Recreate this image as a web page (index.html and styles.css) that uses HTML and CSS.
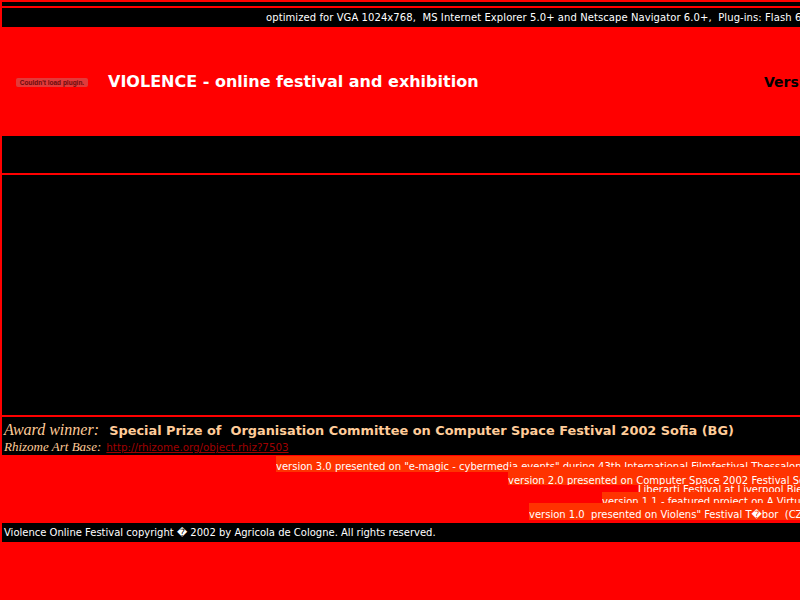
FILE: index.html
```html
<!DOCTYPE html>
<html>
<head>
<meta charset="utf-8">
<title>VIOLENCE - online festival and exhibition</title>
<link rel="stylesheet" href="styles.css">
</head>
<body>
<div class="page">
  <div class="thin"></div>
  <div class="topbar">optimized for VGA 1024x768,&nbsp; MS Internet Explorer 5.0+ and Netscape Navigator 6.0+,&nbsp; Plug-ins: Flash 6</div>
  <div class="header">
    <div class="plugin">Couldn't load plugin.</div>
    <div class="title">VIOLENCE - online festival and exhibition</div>
    <div class="versi">Version 3.0</div>
  </div>
  <div class="navbar"></div>
  <div class="flash"></div>
  <div class="award">
    <div class="line1"><span class="label">Award winner:</span>&nbsp; <b class="prize">Special Prize of&nbsp; Organisation Committee on Computer Space Festival 2002 Sofia (BG)</b></div>
    <div class="line2"><span class="label small">Rhizome Art Base:</span> <a href="#" class="link">http://rhizome.org/object.rhiz?7503</a></div>
  </div>
  <div class="marquees">
    <div class="mq r1"><span>version 3.0 presented on "e-magic - cybermedia events" during 43th International Filmfestival Thessaloniki (GR)</span></div>
    <div class="mq r2"><span>version 2.0 presented on Computer Space 2002 Festival Sofia (BG)</span></div>
    <div class="mq r3"><span>Liberarti Festival at Liverpool Biennial (UK)</span></div>
    <div class="mq r4"><span>version 1.1 - featured project on A Virtual Festival</span></div>
    <div class="mq r5"><span>version 1.0&nbsp; presented on Violens" Festival T�bor&nbsp; (CZ)</span></div>
  </div>
  <div class="footer">Violence Online Festival copyright � 2002 by Agricola de Cologne. All rights reserved.</div>
</div>
</body>
</html>
```
FILE: styles.css
```css
html, body {
  margin: 0;
  padding: 0;
  background: #ff0000;
  overflow: hidden;
}
.page {
  width: 800px;
  height: 600px;
  overflow: hidden;
  box-sizing: border-box;
  padding: 2px 0 0 2px;
  display: flex;
  flex-direction: column;
  font-family: "DejaVu Sans", Verdana, sans-serif;
}
.thin {
  height: 4px;
  background: #000;
  margin-bottom: 2px;
  flex: none;
}
.topbar {
  flex: none;
  height: 19px;
  line-height: 19px;
  background: #000;
  color: #fff;
  font-size: 10px;
  letter-spacing: 0.08px;
  white-space: nowrap;
  padding-left: 264px;
}
.header {
  flex: none;
  height: 109px;
  margin-left: -2px;
  display: flex;
  align-items: center;
  white-space: nowrap;
}
.plugin {
  margin-left: 16px;
  width: 72px;
  height: 9px;
  background: #e23a3a;
  border-radius: 2px;
  color: #6a0c0c;
  font-family: "Liberation Sans", Arial, sans-serif;
  font-size: 6.5px;
  font-weight: bold;
  line-height: 9px;
  text-align: center;
  overflow: hidden;
  margin-top: 1px;
}
.title {
  margin-left: 20px;
  color: #fff;
  font-weight: bold;
  font-size: 16px;
}
.versi {
  margin-left: auto;
  width: 36px;
  color: #000;
  font-weight: bold;
  font-size: 14px;
  flex: none;
}
.navbar {
  flex: none;
  height: 37px;
  background: #000;
  margin-bottom: 2px;
}
.flash {
  flex: none;
  height: 240px;
  background: #000;
  margin-bottom: 2px;
}
.award {
  flex: none;
  height: 38px;
  background: #000;
  box-sizing: border-box;
  padding: 4px 0 0 2px;
  white-space: nowrap;
  color: #ffcc99;
}
.line1 {
  height: 17px;
  line-height: 18px;
}
.line2 {
  height: 15px;
  line-height: 15px;
}
.label {
  font-family: "Liberation Serif", "Times New Roman", serif;
  font-style: italic;
  font-size: 16px;
}
.label.small {
  font-size: 13px;
}
.prize {
  font-size: 12.9px;
  font-weight: bold;
}
.link {
  color: #a00000;
  font-size: 10.3px;
  text-decoration: underline;
}
.marquees {
  flex: none;
  height: 68px;
  margin-left: -2px;
  position: relative;
}
.mq {
  position: absolute;
  right: -600px;
  overflow: hidden;
  background: #ff3300;
  color: #fff;
  font-size: 10px;
  white-space: nowrap;
  line-height: 16px;
  box-sizing: border-box;
}
.mq span { display: block; }
.r1 { left: 276px; top: 1px; height: 16px; padding-top: 3px; z-index: 1; }
.r2 { left: 508px; top: 12px; height: 18px; padding-top: 6px; z-index: 2; }
.r3 { left: 638px; top: 30px; height: 7px; z-index: 3; }
.r3 span { margin-top: -3px; }
.r4 { left: 602px; top: 37px; height: 11px; z-index: 4; }
.r4 span { padding-top: 2px; }
.r5 { left: 529px; top: 48px; height: 17px; padding-top: 4px; z-index: 5; }
.footer {
  flex: none;
  height: 19px;
  line-height: 19px;
  background: #000;
  color: #fff;
  font-size: 10px;
  white-space: nowrap;
  padding-left: 2px;
}
```
